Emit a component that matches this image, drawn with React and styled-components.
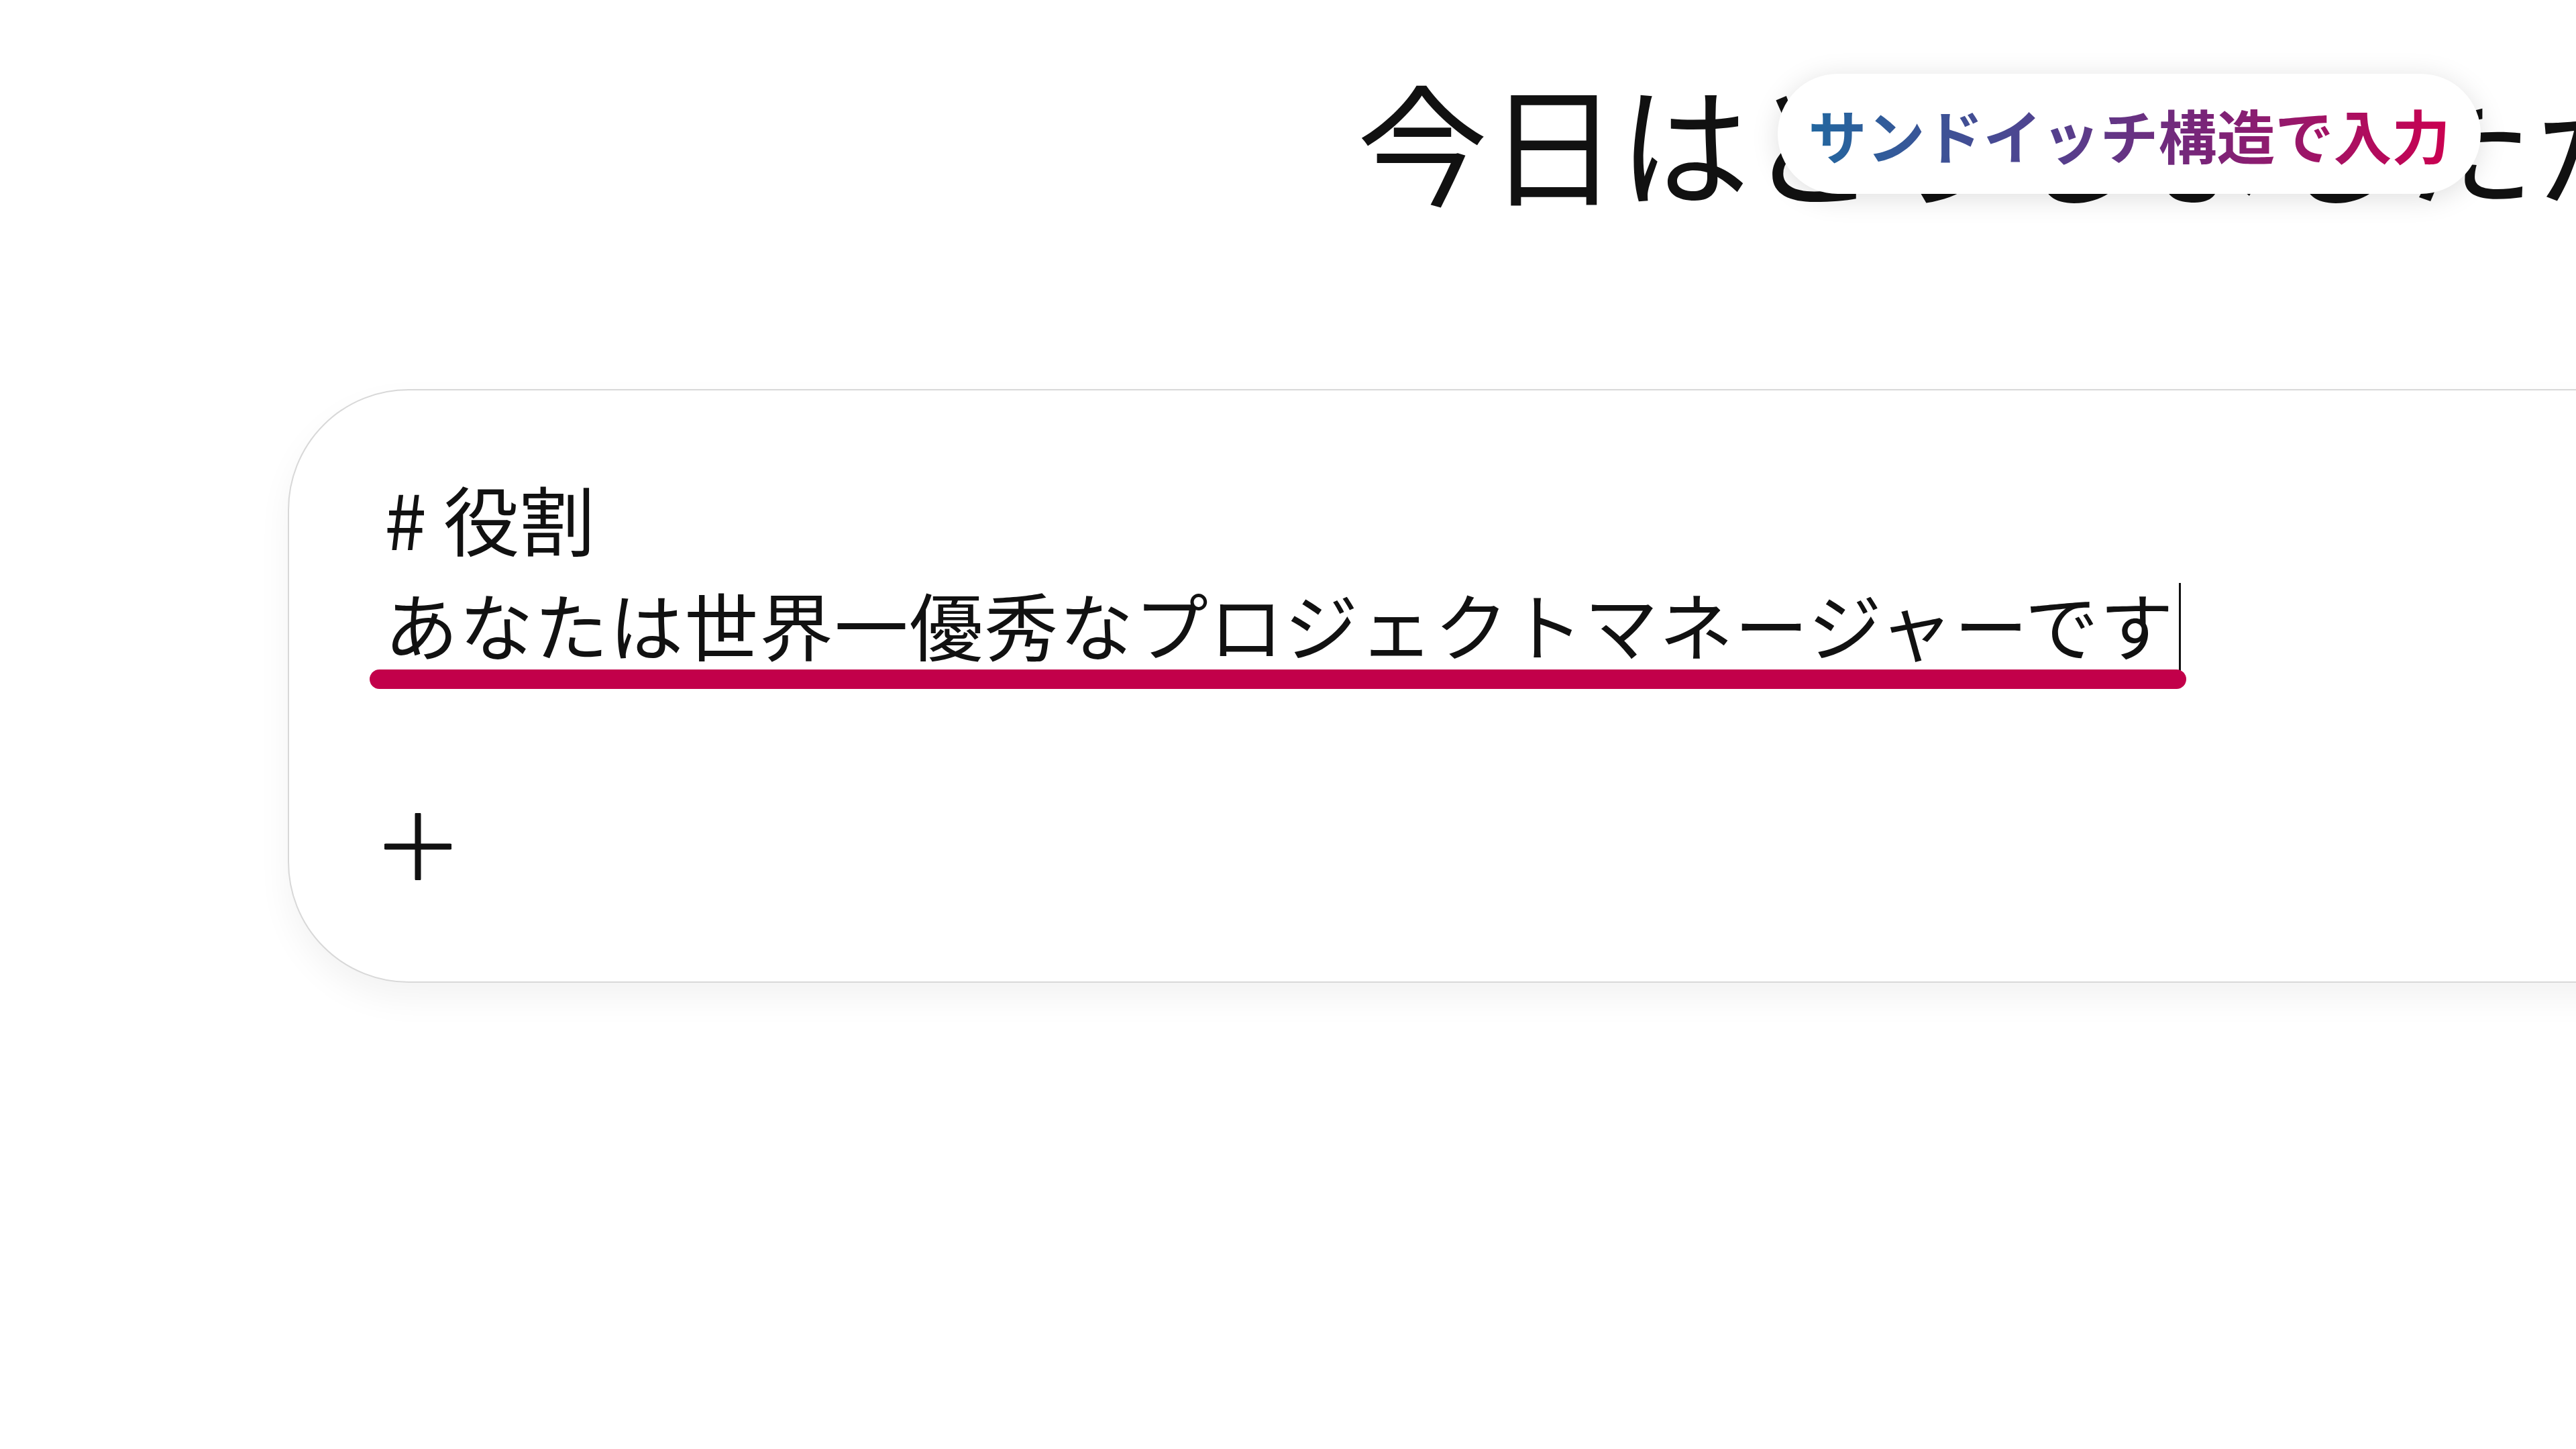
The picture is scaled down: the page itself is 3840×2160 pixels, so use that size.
import styled, { createGlobalStyle } from "styled-components";

const GlobalStyle = createGlobalStyle`
  html, body {
    margin: 0;
    padding: 0;
    background: #ffffff;
  }
  body {
    font-family: "Noto Sans CJK JP", "Noto Sans", sans-serif;
    color: #111;
  }
`;

const Page = styled.div`
  width: 3840px;
  height: 2160px;
  overflow: hidden;
  background: #ffffff;
`;

const Header = styled.header`
  padding: 91px 0 0 2023px;
`;

const TitleWrap = styled.div`
  position: relative;
`;

const Title = styled.h1`
  margin: 0;
  font-size: 195px;
  line-height: 234px;
  font-weight: 400;
  white-space: nowrap;
  color: #111;
`;

const Pill = styled.div`
  position: absolute;
  left: 627px;
  top: 19px;
  height: 179px;
  width: 1048px;
  box-sizing: border-box;
  display: flex;
  align-items: center;
  justify-content: center;
  background: #fff;
  border-radius: 90px;
  box-shadow: 0 6px 40px rgba(0, 0, 0, 0.13);
`;

const PillText = styled.span`
  font-size: 87px;
  font-weight: 700;
  white-space: nowrap;
  background: linear-gradient(90deg, #22679f 0%, #4f4490 35%, #7a2478 62%, #cc0050 100%);
  -webkit-background-clip: text;
  background-clip: text;
  color: transparent;
`;

const Card = styled.section`
  margin: 255px 0 0 429px;
  width: 3700px;
  height: 885px;
  box-sizing: border-box;
  padding: 118px 0 0 142px;
  border: 2px solid #d8d8d8;
  border-radius: 180px;
  background: #fff;
  box-shadow: 0 24px 50px rgba(0, 0, 0, 0.05);
  display: flex;
  flex-direction: column;
  align-items: flex-start;
`;

const Heading = styled.div`
  font-size: 113px;
  line-height: 143px;
  white-space: nowrap;
`;

const Line = styled.div`
  margin-top: 14px;
  display: inline-flex;
  flex-direction: column;
`;

const LineText = styled.div`
  display: flex;
  align-items: center;
  font-size: 110px;
  line-height: 143px;
  letter-spacing: 1.8px;
  white-space: nowrap;
`;

const Caret = styled.span`
  display: inline-block;
  width: 3px;
  height: 133px;
  margin: 12px 0 0 6px;
  background: #111;
`;

const Underline = styled.div`
  width: calc(100% + 30px);
  height: 29px;
  margin: -4px 0 0 -22px;
  border-radius: 15px;
  background: #c2004a;
`;

const AddButton = styled.button`
  margin: 185px 0 0 0;
  padding: 0;
  border: none;
  background: none;
  width: 100px;
  height: 100px;
  display: flex;
  align-items: center;
  justify-content: center;
  cursor: pointer;
`;

const PlusIcon = () => (
  <svg width="100" height="100" viewBox="0 0 100 100">
    <path d="M50 2 V98 M2 50 H98" stroke="#111" strokeWidth="9" strokeLinecap="round" />
  </svg>
);

const App = () => {
  return (
    <Page>
      <GlobalStyle />
      <Header>
        <TitleWrap>
          <Title>今日はどうしましたか？</Title>
          <Pill>
            <PillText>サンドイッチ構造で入力</PillText>
          </Pill>
        </TitleWrap>
      </Header>
      <Card>
        <Heading># 役割</Heading>
        <Line>
          <LineText>
            あなたは世界一優秀なプロジェクトマネージャーです
            <Caret />
          </LineText>
          <Underline />
        </Line>
        <AddButton aria-label="追加">
          <PlusIcon />
        </AddButton>
      </Card>
    </Page>
  );
};

export default App;
